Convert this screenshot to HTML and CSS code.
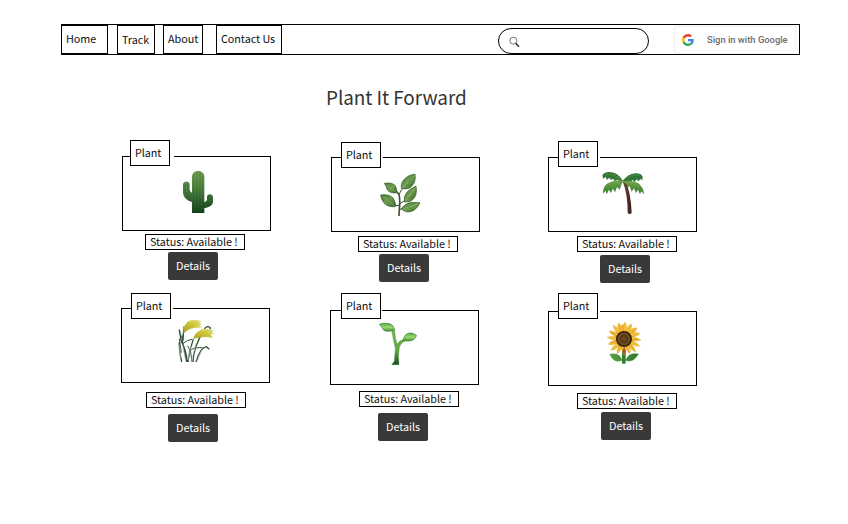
FILE: index.html
```html
<!DOCTYPE html>
<html lang="en">
<head>
<meta charset="utf-8">
<title>Plant It Forward</title>
<link rel="stylesheet" href="styles.css">
</head>
<body>
<header class="nav">
  <nav class="links">
    <a class="link home">Home</a>
    <a class="link track">Track</a>
    <a class="link about">About</a>
    <a class="link contact">Contact Us</a>
  </nav>
  <div class="search">
    <svg class="lens" viewBox="0 0 33 36"><circle cx="13" cy="14" r="10.5" fill="none" stroke="#333" stroke-width="2"/><path d="M20 22L30 32" stroke="#222" stroke-width="4"/></svg>
  </div>
  <button class="google">
    <svg class="g" viewBox="0 0 48 48"><path fill="#EA4335" d="M24 9.5c3.54 0 6.71 1.22 9.21 3.6l6.85-6.85C35.9 2.38 30.47 0 24 0 14.62 0 6.51 5.38 2.56 13.22l7.98 6.19C12.43 13.72 17.74 9.5 24 9.5z"/><path fill="#4285F4" d="M46.98 24.55c0-1.57-.15-3.09-.38-4.55H24v9.02h12.94c-.58 2.96-2.26 5.48-4.78 7.18l7.73 6c4.51-4.18 7.09-10.36 7.09-17.65z"/><path fill="#FBBC05" d="M10.53 28.59A14.5 14.5 0 0 1 9.77 24c0-1.6.27-3.14.76-4.59l-7.98-6.19A23.9 23.9 0 0 0 0 24c0 3.88.92 7.54 2.56 10.78l7.97-6.19z"/><path fill="#34A853" d="M24 48c6.48 0 11.93-2.13 15.89-5.81l-7.73-6c-2.15 1.45-4.92 2.3-8.16 2.3-6.26 0-11.57-4.22-13.47-9.91l-7.98 6.19C6.51 42.62 14.62 48 24 48z"/></svg>
    <span>Sign in with Google</span>
  </button>
</header>
<h1 class="title">Plant It Forward</h1>
<main class="grid">
  <article class="card cactus">
    <div class="frame"><span class="tab">Plant</span>
      <svg class="art" viewBox="39 66 441 219">
        <defs><linearGradient id="cg" x1="0" y1="0" x2="0" y2="1"><stop offset="0" stop-color="#739e4f"/><stop offset=".5" stop-color="#43793a"/><stop offset="1" stop-color="#123f1b"/></linearGradient></defs>
        <path fill="url(#cg)" d="M246 234V201C229 195 219 186 219 170V149C219 136 239 136 239 149V164Q240 170 246 173V125C246 102 283 102 283 125V201Q290 199 291 194V185C292 175 309 175 309 187V202Q307 215 283 220V234Z"/>
        <path fill="none" stroke="#1e4b1d" stroke-width="2" opacity=".4" d="M252 118V233M261 110V233M270 110V233M278 118V233M226 147V178M234 147V185M297 184V207M304 184V204"/>
        <path fill="none" stroke="#a6b67b" stroke-width="1.8" stroke-dasharray="2 9" opacity=".75" d="M256 116V230M266 111V230M275 120V230M230 146V185M301 185V205"/>
      </svg></div>
    <p class="status">Status: Available !</p>
    <button class="details">Details</button>
  </article>
  <article class="card herb">
    <div class="frame"><span class="tab">Plant</span>
      <svg class="art" viewBox="36 69 441 219">
        <defs><linearGradient id="hg" x1="0" y1="0" x2="1" y2="1"><stop offset="0" stop-color="#4a7733"/><stop offset=".5" stop-color="#6f9f50"/><stop offset="1" stop-color="#386729"/></linearGradient></defs>
        <path fill="none" stroke="#435332" stroke-width="5" d="M237 243L238 222Q241 196 237 178L228 168"/>
        <path fill="none" stroke="#435332" stroke-width="3" d="M239 211Q231 214 223 209M239 206L259 194M238 178Q240 168 250 158M238 224L254 218"/>
        <g fill="url(#hg)" stroke="#2d5524" stroke-width="2">
          <path d="M285 117Q290 144 269 159Q255 164 244 160Q241 142 259 127Q271 119 285 117Z"/>
          <path d="M193 145Q216 141 226 152Q232 163 229 173Q212 177 202 165Q199 152 193 145Z"/>
          <path d="M288 153Q294 184 274 197Q265 202 253 201Q250 183 262 170Q273 160 288 153Z"/>
          <path d="M182 180Q209 176 220 190Q228 204 226 215Q204 217 193 205Q185 197 182 180Z"/>
          <path d="M300 203Q287 231 263 231Q252 229 244 222Q255 205 275 202Z"/>
        </g>
        <path fill="none" stroke="#c0d39e" stroke-width="1.5" opacity=".7" d="M281 122L248 158M198 149L227 171M285 160L255 199M188 184L224 213M294 206L249 222"/>
        <path fill="none" stroke="#315d29" stroke-width="1.4" opacity=".65" d="M278 120L265 141M259 149L274 150M286 166L274 182M266 187L279 186M204 181L210 199M199 195L211 201M284 204L272 213M265 216L279 224"/>
      </svg></div>
    <p class="status">Status: Available !</p>
    <button class="details">Details</button>
  </article>
  <article class="card palm">
    <div class="frame"><span class="tab">Plant</span>
      <svg class="art" viewBox="33 69 441 219">
        <defs><linearGradient id="tg"><stop stop-color="#754c40"/><stop offset=".45" stop-color="#5b362c"/><stop offset="1" stop-color="#321d19"/></linearGradient><linearGradient id="pg" x1="0" y1="0" x2="0" y2="1"><stop stop-color="#70a347"/><stop offset="1" stop-color="#337d31"/></linearGradient></defs>
        <path fill="url(#tg)" d="M254 139L263 139Q278 171 281 233Q276 240 269 234Q269 177 254 139Z"/>
        <path fill="#36783a" d="M255 138Q241 112 216 111Q201 109 193 120L195 131L203 126L207 135L214 128L219 135L225 131L230 138L240 134L246 142Z"/>
        <path fill="#2f773b" d="M254 138Q269 117 292 115Q309 114 314 125L313 136L307 132L302 139L296 133L290 141L284 135L277 141L270 137L263 145Z"/>
        <path fill="url(#pg)" d="M256 139Q232 132 211 144Q195 151 195 176L203 167L206 178L213 164L218 174L225 161L231 172L237 156L245 164L250 149Z"/>
        <path fill="url(#pg)" d="M254 140Q279 133 301 145Q317 157 318 178L310 169L306 178L300 164L294 174L288 160L281 170L275 154L269 157L265 146Z"/>
        <path d="M202 117Q230 115 252 137Q278 119 307 120M200 160Q220 141 253 141Q287 139 311 164" fill="none" stroke="#8bab55" stroke-width="2" opacity=".5"/>
      </svg></div>
    <p class="status">Status: Available !</p>
    <button class="details">Details</button>
  </article>
  <article class="card rice">
    <div class="frame"><span class="tab">Plant</span>
      <svg class="art" viewBox="36 63 441 219">
        <defs><linearGradient id="rg" x1="0" y1="1" x2="1" y2="0"><stop stop-color="#a79b25"/><stop offset=".55" stop-color="#cfc938"/><stop offset="1" stop-color="#e9e79c"/></linearGradient></defs>
        <g fill="none" stroke="#35533f" stroke-width="4"><path d="M215 222Q207 185 208 162M231 222Q231 192 213 157L208 125M230 222Q223 185 217 160L221 127M234 222Q237 187 250 154M249 222Q250 177 283 124Q289 112 300 118L301 125M258 222Q271 178 289 176L298 184"/><path stroke-width="3" d="M218 167Q231 155 247 154M239 189Q250 177 277 179M207 128L219 158L222 115M246 222L241 187L232 173M214 194L208 152"/></g>
        <path fill="none" stroke="#a9bcae" stroke-width="2" d="M211 210L209 170M227 218L219 178M245 216L258 166M234 217L243 174M263 217L276 186"/>
        <path fill="url(#rg)" d="M220 137Q219 111 236 99Q247 93 274 98L268 104L276 110L267 113L277 119Q239 115 220 137Z"/>
        <path fill="url(#rg)" d="M249 154Q254 134 273 125Q287 119 312 127L305 132L312 137L301 140L309 149Q270 144 249 154Z"/>
        <path fill="none" stroke="#b5ae28" stroke-width="1.5" opacity=".7" d="M224 131Q234 106 267 101M226 131Q242 109 270 109M253 150Q268 130 305 129M256 150Q279 137 304 138"/>
      </svg></div>
    <p class="status">Status: Available !</p>
    <button class="details">Details</button>
  </article>
  <article class="card sprout">
    <div class="frame"><span class="tab">Plant</span>
      <svg class="art" viewBox="33 69 441 219">
        <defs><linearGradient id="sg" x1="0" y1="0" x2="0" y2="1"><stop stop-color="#7fbe50"/><stop offset=".65" stop-color="#5fa840"/><stop offset="1" stop-color="#194c1b"/></linearGradient><linearGradient id="lg" x1="0" y1="0" x2="0" y2="1"><stop stop-color="#56a538"/><stop offset=".5" stop-color="#9bd977"/><stop offset="1" stop-color="#43902f"/></linearGradient></defs>
        <path fill="url(#sg)" stroke="#397d2b" stroke-width="1" d="M215 126Q219 154 226 181Q224 205 223 220L215 230H237Q234 202 238 178Q242 164 256 158L250 154Q239 158 231 168Q225 150 224 126Q219 116 214 112Z"/>
        <path fill="url(#lg)" stroke="#368632" stroke-width="2" d="M178 109Q185 105 202 106Q219 107 223 123Q222 131 213 129Q191 133 186 119Q182 113 178 109Z"/>
        <path fill="url(#lg)" stroke="#368632" stroke-width="2" d="M290 143Q282 159 268 159Q255 159 249 158Q252 136 271 135Q282 134 290 143Z"/>
      </svg></div>
    <p class="status">Status: Available !</p>
    <button class="details">Details</button>
  </article>
  <article class="card sunflower">
    <div class="frame"><span class="tab">Plant</span>
      <svg class="art" viewBox="33 72 441 219">
        <defs><radialGradient id="fc"><stop stop-color="#73501c"/><stop offset=".5" stop-color="#54371a"/><stop offset=".75" stop-color="#705020"/><stop offset="1" stop-color="#2c1b12"/></radialGradient><linearGradient id="fl"><stop stop-color="#5ea23d"/><stop offset="1" stop-color="#2d792b"/></linearGradient></defs>
        <path fill="#32822d" d="M252 191H263V227H252Z"/>
        <path fill="url(#fl)" stroke="#2b7229" stroke-width="1.5" d="M252 217Q232 224 223 211L216 199Q237 195 246 206ZM263 217Q283 223 294 208L301 198Q279 194 269 207Z"/>
        <circle cx="258" cy="153" r="31" fill="#d9922b"/>
        <g fill="#f3c033" stroke="#d99a2c" stroke-width="1">
          <path d="M258 153L249 120Q255 108 261 102Q268 114 266 125Z"/><path d="M258 153L267 119Q275 109 281 108Q283 117 276 128Z"/><path d="M258 153L277 125Q287 118 297 120Q295 129 284 137Z"/><path d="M258 153L284 134Q297 132 306 137Q299 144 285 147Z"/><path d="M258 153L285 146Q299 149 309 156Q298 160 284 157Z"/><path d="M258 153L286 158Q301 167 305 175Q293 176 280 168Z"/><path d="M258 153L280 169Q292 180 293 192Q280 186 272 177Z"/><path d="M258 153L273 176Q280 189 275 197Q266 188 263 179Z"/><path d="M258 153L264 179Q264 194 258 202Q251 190 252 178Z"/><path d="M258 153L252 179Q246 193 237 197Q236 184 243 174Z"/><path d="M258 153L242 174Q231 188 219 187Q223 174 235 167Z"/><path d="M258 153L235 166Q220 174 211 168Q220 158 233 157Z"/><path d="M258 153L233 157Q217 155 207 148Q217 143 235 147Z"/><path d="M258 153L235 146Q218 140 213 129Q227 128 239 136Z"/><path d="M258 153L238 135Q226 124 226 112Q239 117 248 129Z"/><path d="M258 153L244 128Q237 113 241 105Q252 110 255 123Z"/>
        </g>
        <path stroke="#db8428" stroke-width="3" opacity=".6" d="M254 112L256 127M292 124L280 132M302 156L286 153M287 185L277 171M237 189L248 175M218 164L235 159M218 134L237 141M242 112L249 127"/>
        <path fill="#ad5b25" d="M252 188L259 177L264 190L258 202Z"/>
        <circle cx="258" cy="153" r="22" fill="url(#fc)" stroke="#38210f" stroke-width="4"/>
        <circle cx="258" cy="152" r="15" fill="none" stroke="#85652a" stroke-width="3" stroke-dasharray="2 4"/>
      </svg></div>
    <p class="status">Status: Available !</p>
    <button class="details">Details</button>
  </article>
</main>
</body>
</html>
```
FILE: styles.css
```css
* { box-sizing: border-box; }
body {
  margin: 0;
  padding: 24px 0 0 61px;
  height: 524px;
  background: #fff;
  color: #111;
  font: 10.8px/16px "Noto Sans CJK SC", "Noto Sans", sans-serif;
  letter-spacing: -.05px;
}
button { font: inherit; letter-spacing: inherit; border: 0; padding: 0; }
.nav {
  display: flex;
  align-items: flex-start;
  width: 739px;
  height: 31px;
  border: 1px solid #000;
}
.links { display: flex; margin-left: -1px; width: 437px; }
.link { height: 29px; border: 1px solid #000; padding: 4px 0 0 4px; white-space: nowrap; }
.home { width: 47px; }
.track { width: 38px; margin-left: 9px; padding-top: 5px; }
.about { width: 40px; margin-left: 8px; }
.contact { width: 66px; margin-left: 13px; }
.search {
  width: 151px;
  height: 26px;
  margin-top: 3px;
  border: 1px solid #000;
  border-radius: 13px;
  padding: 7px 0 0 10px;
}
.lens { display: block; width: 11px; height: 12px; }
.google {
  display: flex;
  align-items: center;
  width: 120px;
  height: 26px;
  margin: 2px 0 0 26px;
  padding-left: 7px;
  border-radius: 1px;
  background: #fff;
  box-shadow: 0 0 2px rgba(0, 0, 0, .22);
  color: #6c6c6c;
  font: 500 9.4px/12px Roboto, sans-serif;
  letter-spacing: 0;
  white-space: nowrap;
}
.g { width: 12px; height: 12px; margin-right: 13px; }
.title {
  margin: 28px 0 0 265px;
  height: 30px;
  color: #333;
  font-size: 18.9px;
  font-weight: 400;
  line-height: 28px;
  letter-spacing: -.05px;
}
.grid {
  display: grid;
  grid-template-columns: 209px 217px 149px;
  grid-template-rows: 152px 152px;
  margin: 43px 0 0 60px;
}
.card { padding: var(--top) 0 0 var(--left); }
.frame { position: relative; width: 149px; height: 75px; border: 1px solid #000; }
.tab {
  position: absolute;
  left: var(--tab-x);
  top: var(--tab-y);
  width: 40px;
  height: 26px;
  border: 1px solid #000;
  padding: 3px 0 0 4px;
  background: #fff;
  box-shadow: var(--gap) 0 0 #fff;
}
.art { display: block; width: 147px; height: 73px; }
.status {
  width: 100px;
  height: 16px;
  margin: var(--status-y) 0 0 var(--status-x);
  border: 1px solid #000;
  padding-left: 4px;
  line-height: 12px;
  white-space: nowrap;
}
.details {
  display: block;
  width: 50px;
  height: 28px;
  margin: var(--btn-y) 0 0 var(--btn-x);
  border-radius: 2px;
  padding-bottom: 2px;
  background: #393939;
  color: #fff;
  line-height: 26px;
}
.cactus { --left: 1px; --top: 0px; --tab-x: 7px; --tab-y: -17px; --gap: 4px; --status-x: 23px; --status-y: 3px; --btn-x: 46px; --btn-y: 2px; }
.herb { --left: 1px; --top: 1px; --tab-x: 9px; --tab-y: -16px; --gap: 2px; --status-x: 27px; --status-y: 4px; --btn-x: 48px; --btn-y: 2px; }
.palm { --left: 1px; --top: 1px; --tab-x: 9px; --tab-y: -17px; --gap: 2px; --status-x: 29px; --status-y: 4px; --btn-x: 52px; --btn-y: 3px; }
.rice { --left: 0px; --top: 0px; --tab-x: 9px; --tab-y: -16px; --gap: 2px; --status-x: 25px; --status-y: 9px; --btn-x: 47px; --btn-y: 6px; }
.sprout { --left: 0px; --top: 2px; --tab-x: 10px; --tab-y: -18px; --gap: 1px; --status-x: 29px; --status-y: 6px; --btn-x: 48px; --btn-y: 6px; }
.sunflower { --left: 1px; --top: 3px; --tab-x: 9px; --tab-y: -19px; --gap: 2px; --status-x: 29px; --status-y: 7px; --btn-x: 53px; --btn-y: 3px; }
```
